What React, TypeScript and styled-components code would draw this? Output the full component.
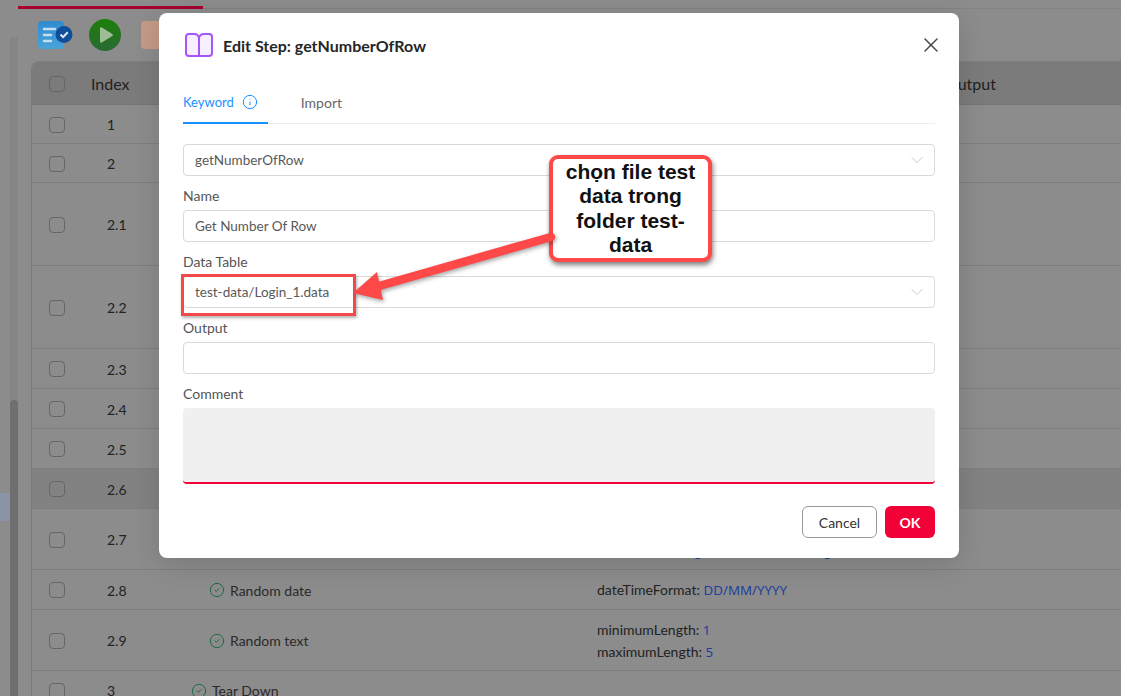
import { createGlobalStyle } from "styled-components";
import styled from "styled-components";
import { CheckCircle2, ChevronDown, Info, X } from "lucide-react";

const GlobalStyle = createGlobalStyle`
  html, body {
    margin: 0;
    height: 100%;
    overflow: hidden;
    background: #8c8c8c;
  }
  * {
    box-sizing: border-box;
  }
  body {
    font-family: Lato, "Noto Sans", sans-serif;
  }
`;

const Page = styled.div`
  position: relative;
  display: grid;
  grid-template-columns: 10px 8px 1fr;
  width: 1121px;
  height: 696px;
  overflow: hidden;
  background: #8c8c8c;
`;

const SideNav = styled.div`
  display: flex;
  flex-direction: column;
  padding-top: 493px;
`;

const SideActive = styled.div`
  height: 28px;
  background: #8a93a8;
`;

const ScrollTrack = styled.div`
  padding-top: 400px;
  margin-top: 37px;
  background: #868686;
`;

const ScrollThumb = styled.div`
  height: 300px;
  margin-top: -37px;
  border-radius: 4px 4px 0 0;
  background: #6f6f6f;
`;

const Main = styled.div`
  display: flex;
  flex-direction: column;
  min-width: 0;
`;

const TabStrip = styled.div`
  height: 9px;
  padding-top: 6px;
  margin-right: -1px;
  border-bottom: 1px solid #828282;
`;

const TabMark = styled.div`
  width: 185px;
  height: 3px;
  background: #a5002e;
`;

const Toolbar = styled.div`
  display: flex;
  align-items: center;
  gap: 16px;
  height: 52px;
  padding-left: 20px;
`;

const OrangeTool = styled.div`
  width: 32px;
  height: 28px;
  margin-left: 4px;
  border-radius: 4px;
  background: #c49a86;
`;

const Table = styled.div`
  margin-left: 13px;
  border-left: 1px solid #7a7a7a;
  border-radius: 8px 0 0 0;
`;

const HeaderRow = styled.div`
  display: grid;
  grid-template-columns: 49px 60px 444px 360px 1fr;
  align-items: center;
  height: 44px;
  padding-top: 1px;
  border-top: 1px solid #7e7e7e;
  border-bottom: 1px solid #757575;
  border-radius: 8px 0 0 0;
  background: #7b7b7b;
  font-size: 16px;
  color: #1f1f1f;
`;

const Row = styled.div<{ $height: number; $active?: boolean }>`
  display: grid;
  grid-template-columns: 49px 60px 444px 360px 1fr;
  align-items: center;
  height: ${({ $height }) => $height}px;
  padding-top: 1px;
  border-bottom: 1px solid #7e7e7e;
  background: ${({ $active }) => ($active ? "#828282" : "#8c8c8c")};
  font-size: 14px;
  color: #222;
`;

const CheckCell = styled.div`
  padding-left: 17px;
  display: flex;
`;

const Checkbox = styled.span`
  width: 16px;
  height: 16px;
  border: 1px solid #666;
  border-radius: 4px;
`;

const IndexTitle = styled.div`
  padding-left: 10px;
`;

const IndexCell = styled.div`
  padding-left: 26px;
`;

const NameCell = styled.div<{ $indent: number }>`
  display: flex;
  align-items: center;
  gap: 5px;
  padding-left: ${({ $indent }) => $indent}px;
  color: #2a2a2a;

  svg {
    flex: none;
    color: #1d6b45;
  }
`;

const ParamCell = styled.div`
  padding-left: 12px;
  line-height: 22px;
`;

const ParamValue = styled.span`
  font-family: "Noto Sans", sans-serif;
  font-size: 13.3px;
  color: #1f3f9e;
`;

const Modal = styled.div`
  position: absolute;
  top: 13px;
  left: 159px;
  width: 800px;
  padding: 20px 24px;
  border-radius: 8px;
  background: #fff;
  box-shadow: 0 6px 28px rgba(0, 0, 0, 0.14);
`;

const ModalHeader = styled.div`
  display: flex;
  align-items: center;
  height: 24px;
  margin-bottom: 27px;
  padding-left: 2px;
`;

const ModalTitle = styled.h2`
  flex: 1;
  margin: 0 0 0 10px;
  font-size: 16px;
  font-weight: 700;
  color: #262626;
`;

const CloseButton = styled.button`
  display: flex;
  margin-right: -8px;
  padding: 0;
  border: 0;
  background: none;
  color: #444;
`;

const Tabs = styled.div`
  display: flex;
  gap: 33px;
  border-bottom: 1px solid #ececec;
`;

const Tab = styled.div<{ $active?: boolean }>`
  display: flex;
  align-items: center;
  gap: 8px;
  height: 40px;
  margin-bottom: -1px;
  padding-bottom: 2px;
  padding-right: ${({ $active }) => ($active ? "10px" : "0")};
  border-bottom: 2px solid ${({ $active }) => ($active ? "#1890ff" : "transparent")};
  font-size: ${({ $active }) => ($active ? "13px" : "14px")};
  color: ${({ $active }) => ($active ? "#1890ff" : "#666")};
`;

const Form = styled.div`
  display: flex;
  flex-direction: column;
  gap: 10px;
  margin-top: 20px;
`;

const Field = styled.div`
  display: flex;
  flex-direction: column;
  gap: 4px;
`;

const Label = styled.div`
  height: 20px;
  line-height: 20px;
  font-size: 14px;
  color: #555;
`;

const Control = styled.div`
  display: flex;
  align-items: center;
  justify-content: space-between;
  height: 32px;
  padding: 0 7px 0 11px;
  border: 1px solid #d9d9d9;
  border-radius: 4px;
  background: #fff;
  font-size: 13.5px;
  color: #595959;

  svg {
    color: #bfbfbf;
  }
`;

const CommentBox = styled.div`
  height: 76px;
  border-bottom: 2px solid #f20038;
  border-radius: 4px;
  background: #f0f0f0;
`;

const Footer = styled.div`
  display: flex;
  justify-content: flex-end;
  gap: 8px;
  margin-top: 22px;
`;

const CancelButton = styled.button`
  width: 75px;
  height: 32px;
  border: 1px solid #999;
  border-radius: 6px;
  background: #fff;
  font: inherit;
  font-size: 14px;
  color: #333;
`;

const OkButton = styled.button`
  width: 50px;
  height: 32px;
  border: 0;
  border-radius: 6px;
  background: #f20038;
  font: inherit;
  font-size: 14px;
  font-weight: 700;
  color: #fff;
`;

const ArrowLayer = styled.svg`
  position: absolute;
  top: 0;
  left: 0;
  width: 1121px;
  height: 696px;
  pointer-events: none;
  filter: drop-shadow(1px 2px 2px rgba(0, 0, 0, 0.35));
`;

const Callout = styled.div`
  position: absolute;
  top: 155px;
  left: 549px;
  display: flex;
  align-items: center;
  justify-content: center;
  width: 163px;
  height: 107px;
  padding: 0 6px;
  border: 4px solid #ff4848;
  border-radius: 9px;
  background: #fff;
  box-shadow: 1px 3px 5px rgba(0, 0, 0, 0.5);
  font-family: "Liberation Sans", Arial, sans-serif;
  font-size: 21px;
  font-weight: 700;
  line-height: 24.3px;
  text-align: center;
  color: #111;
`;

const HighlightBox = styled.div`
  position: absolute;
  top: 274px;
  left: 181px;
  width: 175px;
  height: 42px;
  border: 3px solid #f24a4a;
  box-shadow: 1px 2px 3px rgba(0, 0, 0, 0.3);
`;

type RowData = {
  index: string;
  height: number;
  active?: boolean;
  name?: string;
  indent?: number;
  params?: [string, string][];
};

const rows: RowData[] = [
  { index: "1", height: 39 },
  { index: "2", height: 39 },
  { index: "2.1", height: 83 },
  { index: "2.2", height: 83 },
  { index: "2.3", height: 40 },
  { index: "2.4", height: 40 },
  { index: "2.5", height: 40 },
  { index: "2.6", height: 40, active: true },
  {
    index: "2.7",
    height: 61,
    params: [
      ["format", "text"],
      ["regexPattern", "login-attribute-enabling"],
    ],
  },
  {
    index: "2.8",
    height: 40,
    name: "Random date",
    indent: 68,
    params: [["dateTimeFormat", "DD/MM/YYYY"]],
  },
  {
    index: "2.9",
    height: 61,
    name: "Random text",
    indent: 68,
    params: [
      ["minimumLength", "1"],
      ["maximumLength", "5"],
    ],
  },
  { index: "3", height: 39, name: "Tear Down", indent: 50 },
];

function ListCheckIcon() {
  return (
    <svg width="35" height="30" viewBox="0 0 35 30">
      <defs>
        <linearGradient id="listBlue" x1="0" y1="0" x2="0" y2="1">
          <stop offset="0" stopColor="#2f8bcf" />
          <stop offset="1" stopColor="#4aa4d8" />
        </linearGradient>
      </defs>
      <rect x="0" y="1" width="26" height="28" rx="4" fill="url(#listBlue)" />
      <path d="M6 9h11M6 15h7M6 21h7" stroke="#c4deef" strokeWidth="2.4" strokeLinecap="round" />
      <circle cx="26" cy="14.5" r="8.5" fill="#0f4f9a" />
      <path d="M22.5 14.5l2.600 2.600 4.600-4.800" fill="none" stroke="#e0ebf5" strokeWidth="2" />
    </svg>
  );
}

function PlayIcon() {
  return (
    <svg width="32" height="32" viewBox="0 0 32 32">
      <defs>
        <linearGradient id="playGreen" x1="0" y1="0" x2="0" y2="1">
          <stop offset="0" stopColor="#1c7f08" />
          <stop offset="1" stopColor="#2a6a34" />
        </linearGradient>
      </defs>
      <circle cx="16" cy="16" r="16" fill="url(#playGreen)" />
      <path d="M11 9.500c0-1 1-1.500 1.800-1l10.500 6.500c.8.500.8 1.600 0 2.100l-10.500 6.400c-.8.500-1.800 0-1.800-1z" fill="#9dbd96" />
    </svg>
  );
}

function BookIcon() {
  return (
    <svg width="28" height="24" viewBox="0 0 28 24">
      <path
        d="M1 4a3 3 0 0 1 3-3h5a5 5 0 0 1 5 4 5 5 0 0 1 5-4h5a3 3 0 0 1 3 3v16a3 3 0 0 1-3 3H4a3 3 0 0 1-3-3Z"
        fill="#f5efff"
        stroke="#a855f7"
        strokeWidth="2"
        strokeLinejoin="round"
      />
      <path d="M14 5v18" stroke="#a855f7" strokeWidth="2" />
    </svg>
  );
}

export default function App() {
  return (
    <Page>
      <GlobalStyle />
      <SideNav>
        <SideActive />
      </SideNav>
      <ScrollTrack>
        <ScrollThumb />
      </ScrollTrack>
      <Main>
        <TabStrip>
          <TabMark />
        </TabStrip>
        <Toolbar>
          <ListCheckIcon />
          <PlayIcon />
          <OrangeTool />
        </Toolbar>
        <Table>
          <HeaderRow>
            <CheckCell>
              <Checkbox />
            </CheckCell>
            <IndexTitle>Index</IndexTitle>
            <div />
            <div />
            <div>Output</div>
          </HeaderRow>
          {rows.map((row) => (
            <Row key={row.index} $height={row.height} $active={row.active}>
              <CheckCell>
                <Checkbox />
              </CheckCell>
              <IndexCell>{row.index}</IndexCell>
              {row.name ? (
                <NameCell $indent={row.indent ?? 0}>
                  <CheckCircle2 size={16} strokeWidth={1.5} />
                  {row.name}
                </NameCell>
              ) : (
                <div />
              )}
              <ParamCell>
                {row.params?.map(([key, value]) => (
                  <div key={key}>
                    {key}: <ParamValue>{value}</ParamValue>
                  </div>
                ))}
              </ParamCell>
            </Row>
          ))}
        </Table>
      </Main>

      <Modal>
        <ModalHeader>
          <BookIcon />
          <ModalTitle>Edit Step: getNumberOfRow</ModalTitle>
          <CloseButton>
            <X size={24} strokeWidth={1.4} />
          </CloseButton>
        </ModalHeader>
        <Tabs>
          <Tab $active>
            Keyword
            <Info size={16} strokeWidth={1.5} />
          </Tab>
          <Tab>Import</Tab>
        </Tabs>
        <Form>
          <Control>
            getNumberOfRow
            <ChevronDown size={20} strokeWidth={1} />
          </Control>
          <Field>
            <Label>Name</Label>
            <Control>Get Number Of Row</Control>
          </Field>
          <Field>
            <Label>Data Table</Label>
            <Control>
              test-data/Login_1.data
              <ChevronDown size={20} strokeWidth={1} />
            </Control>
          </Field>
          <Field>
            <Label>Output</Label>
            <Control />
          </Field>
          <Field>
            <Label>Comment</Label>
            <CommentBox />
          </Field>
        </Form>
        <Footer>
          <CancelButton>Cancel</CancelButton>
          <OkButton>OK</OkButton>
        </Footer>
      </Modal>

      <HighlightBox />
      <Callout>chọn file test data trong folder test-data</Callout>
      <ArrowLayer viewBox="0 0 1121 696">
        <line x1="551" y1="237" x2="372" y2="288" stroke="#ff4848" strokeWidth="8.5" strokeLinecap="round" />
        <polygon points="353,293 377,272 383,300" fill="#ff4848" />
      </ArrowLayer>
    </Page>
  );
}
